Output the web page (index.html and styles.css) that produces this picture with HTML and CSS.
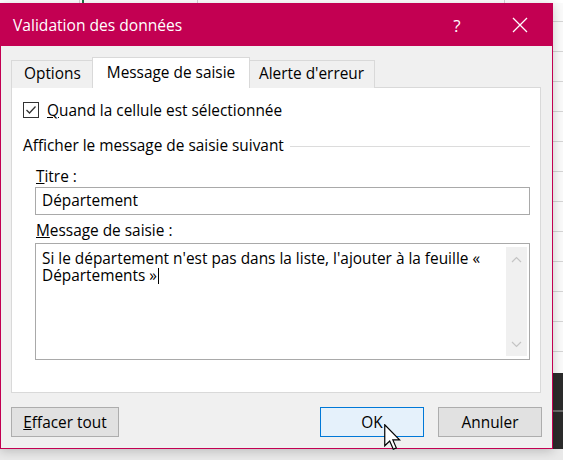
FILE: index.html
```html
<!DOCTYPE html>
<html lang="fr">
<head>
<meta charset="utf-8">
<title>Validation des données</title>
<link rel="stylesheet" href="styles.css">
</head>
<body>
<div class="desktop">
  <div class="dark-cells"></div>
  <div class="dialog">
    <div class="titlebar">
      <span class="title">Validation des données</span>
      <span class="help">?</span>
      <span class="close">
        <svg width="16" height="16" viewBox="0 0 16 16"><path d="M1 1 L15 15 M15 1 L1 15" stroke="#fff" stroke-width="1.3" fill="none"/></svg>
      </span>
    </div>
    <div class="body">
      <div class="tabs">
        <div class="tab">Options</div>
        <div class="tab active">Message de saisie</div>
        <div class="tab">Alerte d'erreur</div>
      </div>
      <div class="panel">
        <div class="check-row">
          <span class="checkbox">
            <svg width="14" height="14" viewBox="0 0 14 14"><path d="M2.5 7 L5.5 10 L11.5 3.5" stroke="#333" stroke-width="1.3" fill="none"/></svg>
          </span>
          <span><u>Q</u>uand la cellule est sélectionnée</span>
        </div>
        <div class="group-head">
          <span>Afficher le message de saisie suivant</span>
          <span class="rule"></span>
        </div>
        <div class="fields">
          <div class="field-label"><u>T</u>itre :</div>
          <div class="input">Département</div>
          <div class="field-label second"><u>M</u>essage de saisie :</div>
          <div class="textarea">
            <div class="text">Si le département n'est pas dans la liste, l'ajouter à la feuille «<br>Départements »<span class="caret"></span></div>
            <div class="scrollbar">
              <svg width="11" height="7" viewBox="0 0 11 7"><path d="M1 6 L5.5 1.5 L10 6" stroke="#c4c4c4" stroke-width="1.2" fill="none"/></svg>
              <svg width="11" height="7" viewBox="0 0 11 7"><path d="M1 1 L5.5 5.5 L10 1" stroke="#c4c4c4" stroke-width="1.2" fill="none"/></svg>
            </div>
          </div>
        </div>
      </div>
      <div class="buttons">
        <button class="btn wide"><u>E</u>ffacer tout</button>
        <span class="spacer"></span>
        <button class="btn default">OK</button>
        <button class="btn">Annuler</button>
      </div>
    </div>
  </div>
  <svg class="cursor" width="18" height="27" viewBox="0 0 12 18">
    <path d="M0.5 0.5 L0.5 14.5 L3.8 11.4 L6.2 16.8 L8.2 15.9 L5.9 10.6 L10.4 10.6 Z" fill="#fff" stroke="#000" stroke-width="0.8" stroke-linejoin="miter"/>
  </svg>
</div>
</body>
</html>
```

FILE: styles.css
```css
* { box-sizing: border-box; }
html, body { margin: 0; padding: 0; }
body {
  width: 563px;
  height: 460px;
  overflow: hidden;
  font-family: "Open Sans", "Noto Sans", sans-serif;
  font-size: 15.4px;
  color: #000;
}
.desktop {
  position: relative;
  width: 563px;
  height: 460px;
  background-color: #e9e9e9;
  background-image:
    linear-gradient(90deg, #fff 0, #fff 79px, #d4d4d4 79px, #d4d4d4 80px, #fff 80px, #fff 82px, #217346 82px, #217346 84px, #fff 84px, #fff 197px, #d4d4d4 197px, #d4d4d4 198px, #fff 198px, #fff 504px, #d4d4d4 504px, #d4d4d4 505px, #fff 505px),
    repeating-linear-gradient(180deg, #fafafa 0, #fafafa 21px, #d4d4d4 21px, #d4d4d4 22px, #fafafa 22px, #fafafa 30px);
  background-size: 563px 3px, 10px 449px;
  background-position: 0 0, 553px 0;
  background-repeat: no-repeat, no-repeat;
}
.dark-cells {
  position: absolute;
  left: 553px;
  top: 373px;
  width: 10px;
  height: 76px;
  background: linear-gradient(180deg, #2b2b2b 0, #2b2b2b 37px, #6a6a6a 37px, #6a6a6a 39px, #2b2b2b 39px);
}
.dialog {
  position: absolute;
  left: 0;
  top: 3px;
  width: 553px;
  height: 446px;
  border: 1px solid #c30052;
  background: #f0f0f0;
  display: flex;
  flex-direction: column;
  box-shadow: 0 2px 10px rgba(0, 0, 0, 0.2);
}
.titlebar {
  height: 42px;
  flex: none;
  background: #c30052;
  color: #fff;
  display: flex;
  align-items: center;
  padding-left: 12px;
  font-size: 15.6px;
}
.title { flex: 1; padding-bottom: 1px; }
.help {
  width: 20px;
  text-align: center;
  font-size: 17px;
  margin-right: 45px;
}
.close {
  width: 16px;
  height: 16px;
  margin-right: 24px;
  display: flex;
}
.body {
  flex: 1;
  display: flex;
  flex-direction: column;
  padding: 11px 11px 11px 10px;
}
.tabs {
  display: flex;
  align-items: flex-end;
  height: 31px;
  position: relative;
  z-index: 1;
}
.tab {
  height: 28px;
  border: 1px solid #d9d9d9;
  border-bottom: none;
  background: #f0f0f0;
  padding: 0 12px;
  display: flex;
  align-items: center;
  padding-bottom: 2px;
  white-space: nowrap;
}
.tab:first-child { width: 81px; border-right: none; }
.tab.active {
  height: 31px;
  width: 158px;
  background: #fff;
  justify-content: center;
  padding-bottom: 2px;
}
.tab:last-child { width: 125px; border-left: none; padding-left: 9px; }
.panel {
  margin-top: -1px;
  height: 306px;
  background: #fff;
  border: 1px solid #d9d9d9;
  padding: 14px 10px 0 11px;
}
.check-row {
  display: flex;
  align-items: center;
  height: 16px;
  gap: 8px;
}
.checkbox {
  width: 16px;
  height: 16px;
  border: 1px solid #333;
  display: flex;
  align-items: center;
  justify-content: center;
  background: #fff;
}
.group-head {
  margin-top: 17px;
  height: 20px;
  display: flex;
  align-items: center;
  gap: 6px;
}
.rule {
  flex: 1;
  height: 1px;
  background: #dcdcdc;
  margin-top: 2px;
}
.fields {
  margin-top: 12px;
  padding-left: 12px;
}
.field-label {
  height: 20px;
  line-height: 20px;
  padding-left: 1px;
}
.field-label.second { margin-top: 6px; }
.input {
  height: 28px;
  border: 1px solid #a9a9a9;
  padding-left: 6px;
  display: flex;
  align-items: center;
  padding-bottom: 1px;
}
.textarea {
  margin-top: 2px;
  height: 117px;
  border: 1px solid #a9a9a9;
  display: flex;
  padding: 3px 2px 3px 6px;
}
.text {
  flex: 1;
  line-height: 17px;
  padding-top: 3px;
  white-space: nowrap;
}
.caret {
  display: inline-block;
  width: 1px;
  height: 16px;
  background: #000;
  vertical-align: -3px;
  margin-left: 1px;
}
.scrollbar {
  width: 21px;
  background: #f0f0f0;
  display: flex;
  flex-direction: column;
  justify-content: space-between;
  align-items: center;
  padding: 9px 0 8px;
}
.buttons {
  margin-top: 14px;
  height: 30px;
  display: flex;
  gap: 14px;
  margin-right: -1px;
}
.spacer { flex: 1; }
.btn {
  width: 104px;
  height: 30px;
  border: 1px solid #adadad;
  background: #e1e1e1;
  font-family: inherit;
  font-size: 15.4px;
  color: #000;
  padding: 0;
  margin: 0;
}
.btn.wide { width: 108px; }
.btn.default {
  border-color: #0078d7;
  background: #e5f1fb;
}
.cursor {
  position: absolute;
  left: 384px;
  top: 424px;
}
```
